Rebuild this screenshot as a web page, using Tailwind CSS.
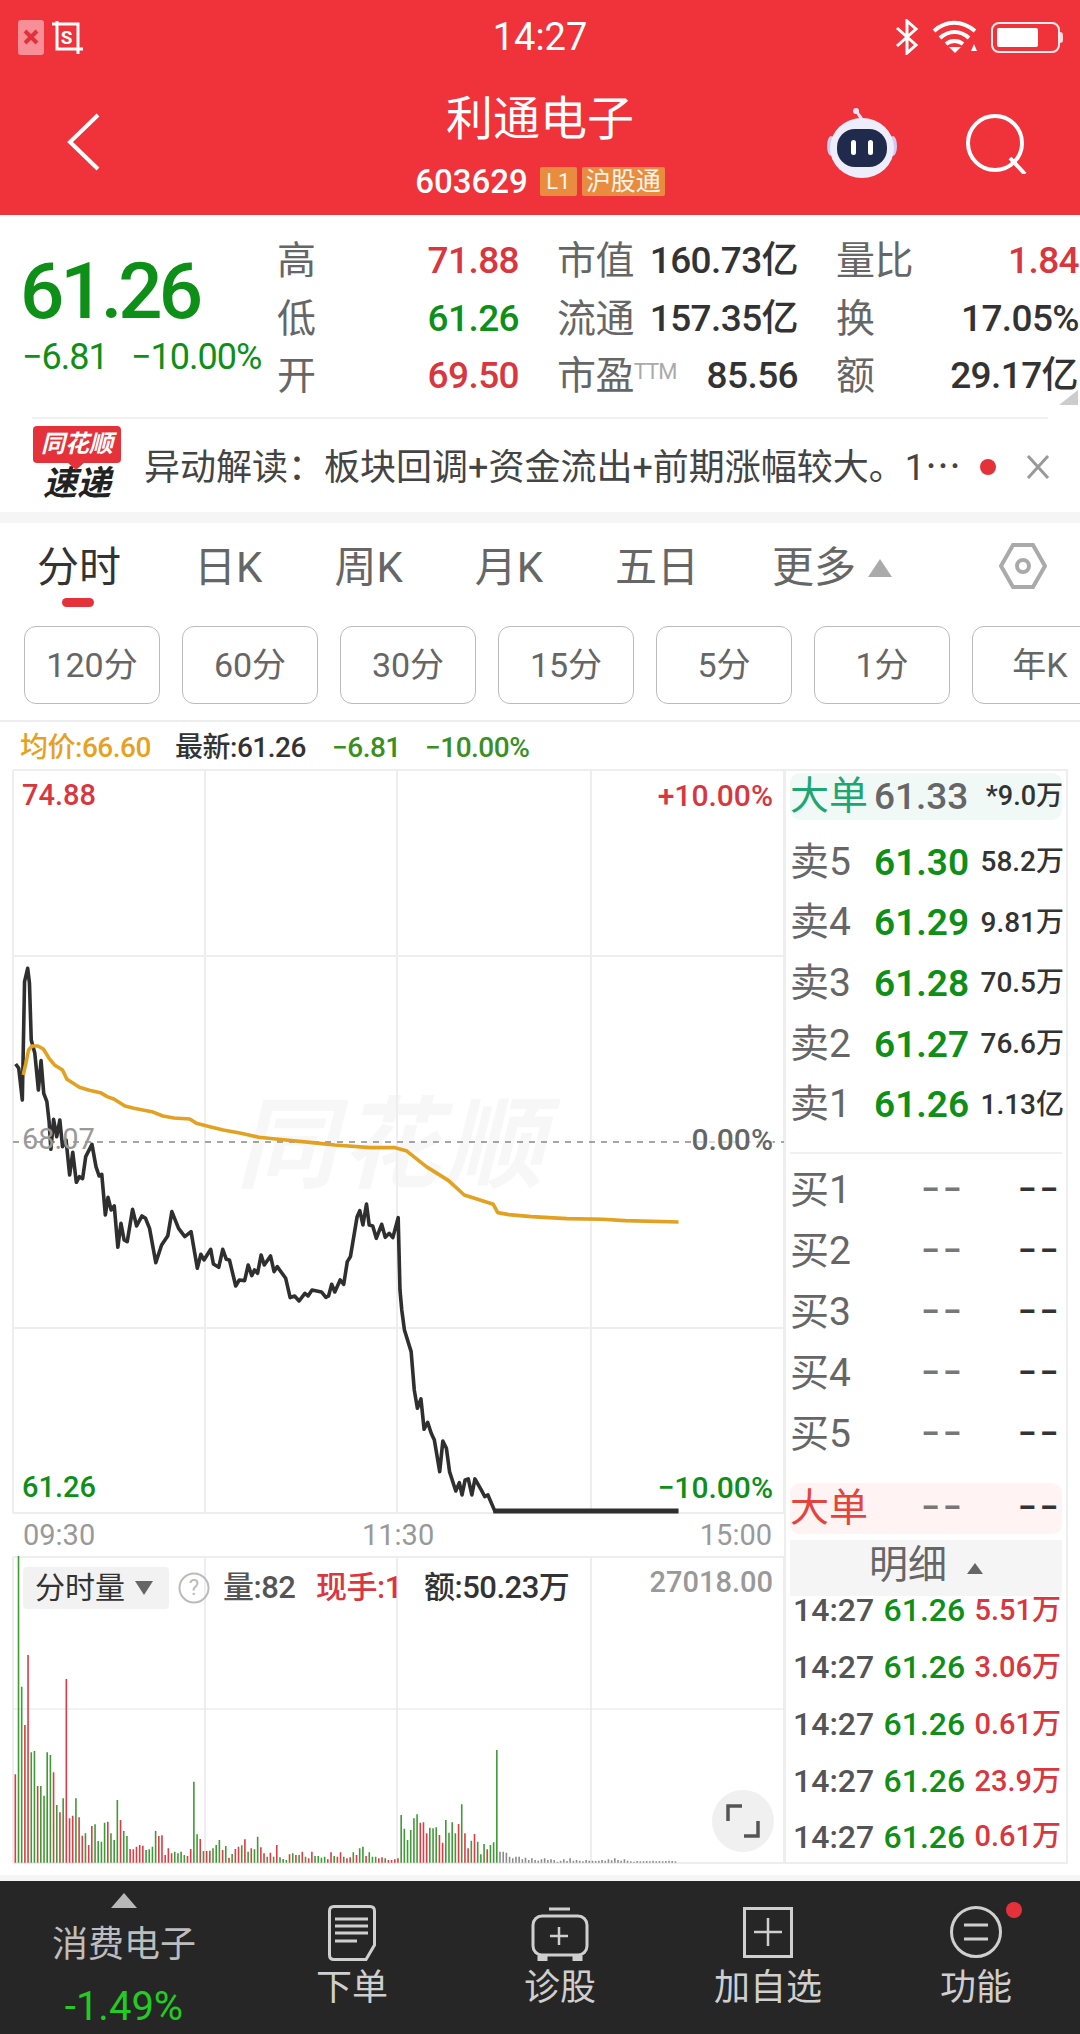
<!DOCTYPE html>
<html lang="zh-CN">
<head>
<meta charset="UTF-8">
<title>利通电子</title>
<script src="https://cdn.jsdelivr.net/npm/@tailwindcss/browser@4"></script>
</head>
<body class="bg-white [font-family:Roboto,'Noto_Sans_CJK_SC',sans-serif]">
<div class="w-[1080px] h-[2034px] overflow-hidden flex flex-col">

  <!-- red header -->
  <header class="h-[215px] shrink-0 bg-[#f0323a] text-white">
    <div class="h-[74px] px-[18px] grid grid-cols-3 items-center">
      <div class="flex items-center gap-[8px]">
        <div class="w-[26px] h-[35px] rounded-[3px] bg-[#f98f96] flex items-center justify-center">
          <svg width="16" height="16" viewBox="0 0 16 16"><path d="M2 2 14 14M14 2 2 14" stroke="#e0323a" stroke-width="4"/></svg>
        </div>
        <div class="relative w-[31px] h-[33px] flex items-center justify-center">
          <svg class="absolute inset-0" width="31" height="33" viewBox="0 0 31 33" fill="none" stroke="#fff" stroke-width="3"><path d="M0 3H26V33M5 0V28H31"/></svg>
          <span class="relative text-[19px] leading-none font-bold mr-[2px]">S</span>
        </div>
      </div>
      <div class="text-center text-[38px] leading-none">14:27</div>
      <div class="flex items-center justify-end gap-[12px] pr-[2px]">
        <svg width="24" height="36" viewBox="0 0 24 36" fill="none" stroke="#fff" stroke-width="3"><path d="M2 9 21 26 12 34V2L21 10 2 27"/></svg>
        <svg width="48" height="34" viewBox="0 0 48 34" fill="none" stroke="#fff" stroke-width="4"><path d="M3 11C15 0 31 0 44 11M9 18C18 10 29 10 38 18M15 24C20 20 27 20 32 24"/><path d="M24 33 18 27H30Z" fill="#fff" stroke="none"/><path d="M43 24 46 31H40Z" fill="#fff" stroke="none"/></svg>
        <div class="relative w-[69px] h-[31px] rounded-[8px] border-2 border-white/90 p-[4px]">
          <div class="w-[41px] h-full bg-white rounded-[2px]"></div>
          <div class="absolute right-[-5px] top-[8px] w-[3px] h-[11px] bg-white/80 rounded-r"></div>
        </div>
      </div>
    </div>
    <div class="h-[141px] flex">
      <div class="w-[300px] pl-[66px] pt-[38px]">
        <svg width="36" height="60" viewBox="0 0 36 60" fill="none" stroke="#fff" stroke-width="4"><path d="M32 3 4 30 32 57"/></svg>
      </div>
      <div class="flex-1 flex flex-col items-center">
        <div class="text-[47px] leading-none mt-[21px] font-normal">利通电子</div>
        <div class="flex items-center mt-[23px]">
          <span class="text-[33px] leading-none font-medium">603629</span>
          <span class="ml-[12px] w-[37px] h-[29px] bg-[#e88c3f] rounded-[2px] text-[22px] leading-[29px] text-center text-white/90">L1</span>
          <span class="ml-[5px] w-[83px] h-[29px] bg-[#e88c3f] rounded-[2px] text-[25px] leading-[29px] text-center text-white/90">沪股通</span>
        </div>
      </div>
      <div class="w-[300px] flex items-start justify-end pr-[52px] gap-[67px] pt-[32px]">
        <svg width="74" height="70" viewBox="0 0 74 70" class="mt-[2px]">
          <path d="M37 12C36 8 33 8 32 3" stroke="#e6e4f8" stroke-width="3" fill="none"/>
          <circle cx="31" cy="3" r="3" fill="#e6e4f8"/>
          <ellipse cx="6" cy="38" rx="4" ry="10" fill="#cfcaf2"/>
          <ellipse cx="68" cy="38" rx="4" ry="10" fill="#cfcaf2"/>
          <ellipse cx="37" cy="40" rx="32" ry="30" fill="#eeedfb"/>
          <rect x="12" y="21" width="50" height="38" rx="18" fill="#1f2a4c"/>
          <rect x="26" y="32" width="5" height="15" rx="2.5" fill="#fff"/>
          <rect x="43" y="32" width="5" height="15" rx="2.5" fill="#fff"/>
        </svg>
        <svg width="62" height="62" viewBox="0 0 62 62" fill="none" stroke="#fff" stroke-width="4" class="mt-[6px] shrink-0"><circle cx="29" cy="31" r="27"/><path d="M44 46 59 62"/></svg>
      </div>
    </div>
  </header>

  <!-- quote block -->
  <section class="h-[202px] shrink-0 relative flex">
    <div class="w-[277px] pl-[20px] pt-[35px] shrink-0">
      <div class="text-[78px] leading-[84px] font-medium text-[#0e8f17] tracking-[-4px]">61.26</div>
      <div class="flex text-[36px] leading-none text-[#0e8f17] mt-[5px] tracking-[-1px]">
        <span class="w-[111px] pl-[2px]">−6.81</span><span>−10.00%</span>
      </div>
    </div>
    <div class="grid grid-cols-[242px_241px_243px] gap-x-[38px] auto-rows-[57.5px] pt-[18px] text-[37px] items-center leading-none font-medium text-[#333] tracking-[-0.6px]">
      <div class="flex justify-between"><span class="font-normal text-[39px] text-[#666]">高</span><span class="text-[#d9363e]">71.88</span></div>
      <div class="flex justify-between"><span class="font-normal text-[39px] text-[#666]">市值</span><span>160.73亿</span></div>
      <div class="flex justify-between"><span class="font-normal text-[39px] text-[#666]">量比</span><span class="text-[#d9363e]">1.84</span></div>
      <div class="flex justify-between"><span class="font-normal text-[39px] text-[#666]">低</span><span class="text-[#0e8f17]">61.26</span></div>
      <div class="flex justify-between"><span class="font-normal text-[39px] text-[#666]">流通</span><span>157.35亿</span></div>
      <div class="flex justify-between"><span class="font-normal text-[39px] text-[#666]">换</span><span>17.05%</span></div>
      <div class="flex justify-between"><span class="font-normal text-[39px] text-[#666]">开</span><span class="text-[#d9363e]">69.50</span></div>
      <div class="flex justify-between"><span class="font-normal text-[39px] text-[#666]">市盈<span class="text-[22px] align-[10px] text-[#aaa] tracking-[-1px]">TTM</span></span><span>85.56</span></div>
      <div class="flex justify-between"><span class="font-normal text-[39px] text-[#666]">额</span><span class="pr-[1px]">29.17亿</span></div>
    </div>
    <svg class="absolute left-[1055px] top-[175px]" width="23" height="15" viewBox="0 0 23 15"><path d="M23 0V15H4Z" fill="#ccc"/></svg>
  </section>

  <!-- news ticker -->
  <section class="h-[95px] shrink-0 mx-[32px] border-t-2 border-[#f0f0f0] flex items-center relative">
    <div class="w-[88px] ml-[1px] flex flex-col items-center shrink-0 mt-[-4px]">
      <div class="relative w-[88px] h-[37px] rounded-[4px] bg-[#e5323a] text-white text-[24px] leading-[37px] text-center italic font-bold">同花顺
        <svg class="absolute left-[34px] top-[36px]" width="18" height="8" viewBox="0 0 18 8"><path d="M0 0H18L9 8Z" fill="#e5323a"/></svg>
      </div>
      <div class="text-[34px] leading-[36px] mt-[2px] italic font-bold text-[#222]">速递</div>
    </div>
    <div class="ml-[23px] text-[36px] leading-none text-[#444] whitespace-nowrap">异动解读：板块回调+资金流出+前期涨幅较大。1<span class="[font-family:'Noto_Sans_CJK_SC',sans-serif]">…</span></div>
    <div class="absolute left-[948px] top-[40px] w-[16px] h-[16px] rounded-full bg-[#e5323a]"></div>
    <svg class="absolute left-[994px] top-[36px]" width="24" height="24" viewBox="0 0 24 24"><path d="M2 1 22 23M22 1 2 23" stroke="#999" stroke-width="3"/></svg>
  </section>
  <div class="h-[11px] shrink-0 bg-[#f5f5f5]"></div>

  <!-- period tabs -->
  <nav class="h-[89px] shrink-0 relative flex items-center pl-[37px] text-[42px] leading-none text-[#666]">
    <span class="text-[#333]">分时</span>
    <span class="ml-[73px]">日K</span>
    <span class="ml-[72px]">周K</span>
    <span class="ml-[72px]">月K</span>
    <span class="ml-[72px]">五日</span>
    <span class="ml-[73px]">更多</span>
    <svg class="ml-[12px]" width="24" height="18" viewBox="0 0 24 18"><path d="M12 0 24 18H0Z" fill="#aaa"/></svg>
    <svg class="absolute left-[999px] top-[19px]" width="48" height="48" viewBox="0 0 48 48" fill="none" stroke="#aaa" stroke-width="4"><path d="M14 3H34L46 24 34 45H14L2 24Z"/><circle cx="24" cy="24" r="6"/></svg>
    <div class="absolute left-[62px] top-[75px] w-[32px] h-[9px] rounded-full bg-[#e5323a]"></div>
  </nav>

  <!-- minute buttons -->
  <div class="h-[110px] shrink-0 flex gap-[22px] pl-[24px] pt-[14px] overflow-hidden border-b-2 border-[#eee] text-[34px] text-[#666]">
    <div class="w-[136px] h-[78px] shrink-0 rounded-[12px] border border-[#bbb] flex items-center justify-center">120分</div>
    <div class="w-[136px] h-[78px] shrink-0 rounded-[12px] border border-[#bbb] flex items-center justify-center">60分</div>
    <div class="w-[136px] h-[78px] shrink-0 rounded-[12px] border border-[#bbb] flex items-center justify-center">30分</div>
    <div class="w-[136px] h-[78px] shrink-0 rounded-[12px] border border-[#bbb] flex items-center justify-center">15分</div>
    <div class="w-[136px] h-[78px] shrink-0 rounded-[12px] border border-[#bbb] flex items-center justify-center">5分</div>
    <div class="w-[136px] h-[78px] shrink-0 rounded-[12px] border border-[#bbb] flex items-center justify-center">1分</div>
    <div class="w-[136px] h-[78px] shrink-0 rounded-[12px] border border-[#bbb] flex items-center justify-center">年K</div>
  </div>

  <!-- legend -->
  <div class="h-[47px] shrink-0 flex items-center pl-[20px] pt-[4px] text-[28px] leading-none font-medium tracking-[-0.5px]">
    <span class="w-[155px] text-[#e8a020]">均价:66.60</span>
    <span class="w-[157px] text-[#333]">最新:61.26</span>
    <span class="w-[93px] text-[#3a8f22]">−6.81</span>
    <span class="text-[#3a8f22]">−10.00%</span>
  </div>

  <!-- chart + order book -->
  <div class="h-[1095px] shrink-0 flex">
    <div class="relative w-[784px] shrink-0">
      <svg id="chart" class="absolute inset-0" width="784" height="1095" viewBox="0 769 784 1095" fill="none">
        <g stroke="#eee" stroke-width="2">
          <path d="M13 770H784M13 956H784M13 1328H784M13 1513H784M13 1557H784M13 1863H784"/>
          <path d="M13 770V1513M205 770V1513M397 770V1513M591 770V1513M784 770V1513M13 1557V1863M205 1557V1863M397 1557V1863M591 1557V1863M784 1557V1863"/>
          <path d="M13 1709H784" stroke="#e4e4e4" stroke-width="1"/>
        </g>
        <path d="M13 1142H784" stroke="#888" stroke-width="1.5" stroke-dasharray="6 6"/>
        <g transform="translate(0 940) scale(.4464 .3333)" fill="none" stroke-linejoin="round">
          <polyline vector-effect="non-scaling-stroke" stroke="#2f2f2f" stroke-width="3.6" points="35,372 42,385 50,480 55,125 62,85 66,130 70,300 78,340 86,450 92,362 98,460 105,485 110,545 114,628 120,538 127,590 134,540 140,620 148,600 156,705 163,637 171,727 178,710 185,716 192,650 206,613 215,680 222,708 228,703 236,825 242,772 249,810 256,798 264,922 271,850 278,900 285,905 297,808 306,858 318,828 326,835 335,865 349,968 362,915 376,887 385,815 400,865 414,890 428,875 442,985 450,943 457,960 472,928 478,972 490,982 499,928 507,958 514,960 528,1038 536,1020 548,1022 556,975 564,1007 570,990 577,1000 585,945 592,975 606,948 614,995 621,980 640,1015 650,1073 660,1068 670,1083 683,1060 690,1068 699,1050 720,1056 730,1072 736,1068 743,1033 750,1056 762,1020 770,1033 778,965 785,950 800,830 806,812 813,855 821,792 827,855 835,858 843,895 855,853 863,892 872,880 880,893 892,833 896,1050 900,1110 906,1170 921,1235 928,1350 935,1405 943,1377 950,1468 958,1447 966,1480 973,1500 985,1595 992,1503 1000,1525 1007,1595 1021,1653 1029,1628 1035,1665 1042,1620 1049,1617 1057,1665 1064,1617 1078,1650 1086,1670 1093,1665 1109,1715"/>
          <polyline vector-effect="non-scaling-stroke" stroke="#2f2f2f" stroke-width="5" points="1105,1713 1520,1713"/>
          <polyline vector-effect="non-scaling-stroke" stroke="#e3a122" stroke-width="3.6" points="52,405 58,370 64,330 72,318 85,318 97,327 110,355 122,375 140,390 150,418 178,442 200,451 225,458 240,470 255,477 280,498 300,505 340,515 365,528 390,534 425,537 440,550 470,560 500,570 540,580 580,592 640,600 700,608 750,615 830,623 885,623 910,632 955,680 1005,722 1040,765 1070,778 1105,793 1115,818 1140,824 1190,830 1270,836 1350,838 1400,842 1520,846"/>
        </g>
        <g id="bars" transform="translate(0 1540) scale(.5102 .3333)"></g>
      </svg>

      <!-- watermark and chart labels sit over the plot -->
      <div class="absolute left-[236px] top-[327px] text-[100px] leading-none italic text-black/[0.03] font-bold tracking-[4px] -z-10">同花顺</div>
      <span class="absolute left-[22px] top-[12px] text-[29px] leading-none font-medium text-[#d9363e]">74.88</span>
      <span class="absolute right-[11px] top-[12px] text-[30px] leading-none font-medium text-[#d9363e]">+10.00%</span>
      <span class="absolute left-[22px] top-[356px] text-[29px] leading-none text-[#999]">68.07</span>
      <span class="absolute right-[11px] top-[356px] text-[30px] leading-none font-medium text-[#666] bg-white/60">0.00%</span>
      <span class="absolute left-[22px] top-[704px] text-[29px] leading-none font-medium text-[#0e8f17]">61.26</span>
      <span class="absolute right-[11px] top-[704px] text-[30px] leading-none font-medium text-[#0e8f17]">−10.00%</span>
      <span class="absolute left-[23px] top-[752px] text-[29px] leading-none text-[#999]">09:30</span>
      <span class="absolute left-[362px] top-[752px] text-[29px] leading-none text-[#999]">11:30</span>
      <span class="absolute right-[12px] top-[752px] text-[29px] leading-none text-[#999]">15:00</span>

      <div class="absolute left-[23px] top-[798px] h-[42px] w-[146px] rounded-[4px] bg-[#f2f2f2] flex items-center pl-[12px] text-[30px] leading-none text-[#333]">分时量
        <svg class="ml-[10px]" width="18" height="14" viewBox="0 0 18 14"><path d="M0 0H18L9 14Z" fill="#666"/></svg>
      </div>
      <svg class="absolute left-[178px] top-[802px]" width="32" height="34" viewBox="0 0 32 34" fill="none"><circle cx="16" cy="17" r="14.5" stroke="#bbb" stroke-width="2"/></svg>
      <span class="absolute left-[178px] top-[802px] w-[32px] h-[34px] text-[22px] leading-[34px] text-center text-[#bbb]">?</span>
      <div class="absolute left-[223px] top-[803px] flex text-[31px] leading-none font-medium tracking-[-0.5px] text-[#555]">
        <span class="w-[93px]">量:82</span><span class="w-[108px] text-[#d9363e]">现手:1</span><span class="text-[#333]">额:50.23万</span>
      </div>
      <span class="absolute right-[11px] top-[799px] text-[29px] leading-none font-medium text-[#999]">27018.00</span>

      <div class="absolute left-[712px] top-[1021px] w-[62px] h-[62px] rounded-full bg-[#eee]/90 flex items-center justify-center">
        <svg width="34" height="34" viewBox="0 0 34 34" fill="none" stroke="#555" stroke-width="3.5"><path d="M2 17V2H16M32 17V32H18"/></svg>
      </div>
    </div>

    <!-- order book -->
    <aside class="w-[284px] h-[1095px] shrink-0 px-[4px] border-2 border-[#eee] box-border">
      <div class="h-[47px] mt-[2px] rounded-[10px] bg-[#f0f9f6] flex items-center whitespace-nowrap">
        <span class="w-[84px] text-[39px] leading-none text-[#1ea672]">大单</span>
        <span class="text-[37px] leading-none text-[#666] font-medium">61.33</span>
        <span class="ml-auto -mr-[1px] text-[27px] leading-none text-[#333] font-medium">*9.0万</span>
      </div>

      <div class="mt-[12px] text-[39px]">
        <div class="h-[60.6px] flex items-center"><span class="w-[84px] leading-none text-[#666]">卖5</span><span class="text-[37px] leading-none font-semibold text-[#0e8f17]">61.30</span><span class="flex-1 -mr-[2px] text-right text-[28px] leading-none font-medium text-[#333]">58.2万</span></div>
        <div class="h-[60.6px] flex items-center"><span class="w-[84px] leading-none text-[#666]">卖4</span><span class="text-[37px] leading-none font-semibold text-[#0e8f17]">61.29</span><span class="flex-1 -mr-[2px] text-right text-[28px] leading-none font-medium text-[#333]">9.81万</span></div>
        <div class="h-[60.6px] flex items-center"><span class="w-[84px] leading-none text-[#666]">卖3</span><span class="text-[37px] leading-none font-semibold text-[#0e8f17]">61.28</span><span class="flex-1 -mr-[2px] text-right text-[28px] leading-none font-medium text-[#333]">70.5万</span></div>
        <div class="h-[60.6px] flex items-center"><span class="w-[84px] leading-none text-[#666]">卖2</span><span class="text-[37px] leading-none font-semibold text-[#0e8f17]">61.27</span><span class="flex-1 -mr-[2px] text-right text-[28px] leading-none font-medium text-[#333]">76.6万</span></div>
        <div class="h-[60.6px] flex items-center"><span class="w-[84px] leading-none text-[#666]">卖1</span><span class="text-[37px] leading-none font-semibold text-[#0e8f17]">61.26</span><span class="flex-1 -mr-[2px] text-right text-[28px] leading-none font-medium text-[#333]">1.13亿</span></div>
      </div>

      <div class="mt-[17px] mb-[6px] h-[2px] bg-[#f0f0f0]"></div>

      <div class="text-[39px]">
        <div class="h-[61px] flex items-center"><span class="w-[132px] leading-none text-[#666]">买1</span><span class="w-[97px] font-black text-[27px] leading-none text-[#777] tracking-[5px]">––</span><span class="font-black text-[27px] leading-none text-[#333] tracking-[5px]">––</span></div>
        <div class="h-[61px] flex items-center"><span class="w-[132px] leading-none text-[#666]">买2</span><span class="w-[97px] font-black text-[27px] leading-none text-[#777] tracking-[5px]">––</span><span class="font-black text-[27px] leading-none text-[#333] tracking-[5px]">––</span></div>
        <div class="h-[61px] flex items-center"><span class="w-[132px] leading-none text-[#666]">买3</span><span class="w-[97px] font-black text-[27px] leading-none text-[#777] tracking-[5px]">––</span><span class="font-black text-[27px] leading-none text-[#333] tracking-[5px]">––</span></div>
        <div class="h-[61px] flex items-center"><span class="w-[132px] leading-none text-[#666]">买4</span><span class="w-[97px] font-black text-[27px] leading-none text-[#777] tracking-[5px]">––</span><span class="font-black text-[27px] leading-none text-[#333] tracking-[5px]">––</span></div>
        <div class="h-[61px] flex items-center"><span class="w-[132px] leading-none text-[#666]">买5</span><span class="w-[97px] font-black text-[27px] leading-none text-[#777] tracking-[5px]">––</span><span class="font-black text-[27px] leading-none text-[#333] tracking-[5px]">––</span></div>
      </div>

      <div class="h-[51px] mt-[18px] rounded-[10px] bg-[#fff3f3] flex items-center">
        <span class="w-[132px] text-[39px] leading-none text-[#e5443c]">大单</span>
        <span class="w-[97px] font-black text-[27px] leading-none text-[#777] tracking-[5px]">––</span>
        <span class="font-black text-[27px] leading-none text-[#333] tracking-[5px]">––</span>
      </div>

      <div class="h-[56px] mt-[6px] bg-[#f5f5f6] flex items-start justify-center pt-[3px] text-[39px] leading-[44px] text-[#666]">
        明细
        <svg class="ml-[20px] mt-[20px]" width="16" height="11" viewBox="0 0 16 11"><path d="M8 0 16 11H0Z" fill="#666"/></svg>
      </div>

      <div class="-mt-[14px] text-[32px] font-medium relative">
        <div class="h-[57px] flex items-center justify-between pl-[3px] pr-[1px] leading-none"><span class="text-[#555]">14:27</span><span class="text-[#0e8f17]">61.26</span><span class="text-[#d9363e] text-[29px]">5.51万</span></div>
        <div class="h-[57px] flex items-center justify-between pl-[3px] pr-[1px] leading-none"><span class="text-[#555]">14:27</span><span class="text-[#0e8f17]">61.26</span><span class="text-[#d9363e] text-[29px]">3.06万</span></div>
        <div class="h-[57px] flex items-center justify-between pl-[3px] pr-[1px] leading-none"><span class="text-[#555]">14:27</span><span class="text-[#0e8f17]">61.26</span><span class="text-[#d9363e] text-[29px]">0.61万</span></div>
        <div class="h-[57px] flex items-center justify-between pl-[3px] pr-[1px] leading-none"><span class="text-[#555]">14:27</span><span class="text-[#0e8f17]">61.26</span><span class="text-[#d9363e] text-[29px]">23.9万</span></div>
        <div class="h-[54px] flex items-center justify-between pl-[3px] pr-[1px] leading-none"><span class="text-[#555]">14:27</span><span class="text-[#0e8f17]">61.26</span><span class="text-[#d9363e] text-[29px]">0.61万</span></div>
      </div>
    </aside>
  </div>

  <div class="h-[11px] shrink-0"></div>
  <div class="h-[6px] shrink-0 bg-[#f5f5f5]"></div>

  <!-- bottom bar -->
  <footer class="h-[153px] shrink-0 bg-[#262626] flex text-[#cfcfcf]">
    <div class="w-[248px] flex flex-col items-center pt-[12px]">
      <svg width="26" height="15" viewBox="0 0 26 15"><path d="M13 0 26 15H0Z" fill="#b8b8b8"/></svg>
      <div class="mt-[19px] text-[36px] leading-none text-[#bdbdbd]">消费电子</div>
      <div class="mt-[24px] text-[40px] leading-none text-[#22cc22]">-1.49%</div>
    </div>
    <div class="w-[208px] flex flex-col items-center pt-[24px]">
      <svg width="48" height="56" viewBox="0 0 48 56" fill="none" stroke="#cfcfcf" stroke-width="3"><path d="M6 1.5H42Q46.5 1.5 46.5 6V40L38 54.5H6Q1.5 54.5 1.5 50V6Q1.5 1.5 6 1.5Z"/><path d="M7 14H40M7 21H40M7 28H40M7 36H29"/></svg>
      <div class="mt-[9px] text-[36px] leading-none">下单</div>
    </div>
    <div class="w-[208px] flex flex-col items-center pt-[24px]">
      <svg width="58" height="56" viewBox="0 0 58 56" fill="none" stroke="#cfcfcf" stroke-width="3"><path d="M18 4H39"/><rect x="2" y="11" width="54" height="39" rx="9"/><path d="M8 51V55H15V51M43 51V55H50V51" fill="#cfcfcf"/><path d="M28 22V40M19 31H37" stroke-width="2.5"/></svg>
      <div class="mt-[9px] text-[36px] leading-none">诊股</div>
    </div>
    <div class="w-[208px] flex flex-col items-center pt-[24px]">
      <svg width="50" height="56" viewBox="0 0 50 56" fill="none" stroke="#cfcfcf" stroke-width="3"><rect x="1.5" y="3.5" width="47" height="48"/><path d="M25 13V41M11 27H39" stroke-width="2.5"/></svg>
      <div class="mt-[9px] text-[36px] leading-none">加自选</div>
    </div>
    <div class="relative w-[208px] flex flex-col items-center pt-[24px]">
      <svg width="52" height="56" viewBox="0 0 52 56" fill="none" stroke="#cfcfcf" stroke-width="3"><circle cx="26" cy="27" r="24.5"/><path d="M14 20H38M14 34H38"/></svg>
      <div class="mt-[9px] text-[36px] leading-none">功能</div>
      <div class="absolute left-[134px] top-[21px] w-[16px] h-[16px] rounded-full bg-[#e5323a]"></div>
    </div>
  </footer>
</div>

<script>
  // volume bars: tops in a 0-968 plot, one letter per bar for its colour
  const tops = [703,48,440,555,345,637,633,738,738,767,637,645,697,795,817,775,417,835,827,775,832,887,880,915,858,853,903,905,848,845,880,900,780,840,873,888,927,928,920,915,917,930,928,920,873,888,886,945,925,940,935,940,935,945,948,927,725,883,897,933,933,932,925,915,900,930,918,953,942,927,920,916,898,935,925,928,890,922,940,950,938,950,915,952,957,960,943,940,945,945,935,950,955,935,948,948,953,950,958,937,948,950,937,950,955,952,937,945,925,920,948,937,950,950,955,952,955,960,960,958,955,825,866,900,870,835,823,848,847,880,863,865,862,885,908,840,878,847,880,852,793,880,925,902,882,905,943,912,928,915,907,630];
  const colors = 'rggrrggrgg' + 'ggrgrgrrrg' + 'rrgrrggggr' + 'gggrggrrrr' + 'rggggrrrrr' + 'ggggrrggrg' + 'rrgggrgrgr' + 'rgrgrggrrg' + 'rgrgggrgrg' + 'rgrrggggrr' + 'grrgrrgrgg' + 'rgggrrgrrr' + 'rggggggrrr' + 'gggrrggggr' + 'grrgrgggrg' + 'gg';
  const grays = [935,935,938,950,955,950,950,958,953,960,955,960,962,958,955,960,958,960,965,962,958,963,955,962,960,962,964,960,962,962,963,962,960,962,958,961,955,960,962,958,962,964,965,963,964,964,963,964,962,964,963,964,963,962,963,964];
  const paths = {r: '', g: '', n: ''};
  tops.forEach((t, i) => { paths[colors[i]] += `M${(30 + i * 6.25).toFixed(1)} ${t}V968`; });
  grays.forEach((t, i) => { paths.n += `M${(980 + i * 6.25).toFixed(1)} ${t}V968`; });
  const stroke = {r: '#dc3c44', g: '#3f9a35', n: '#8a8a8a'};
  const bars = document.getElementById('bars');
  for (const k in paths) {
    const p = document.createElementNS('http://www.w3.org/2000/svg', 'path');
    p.setAttribute('d', paths[k]);
    p.setAttribute('stroke', stroke[k]);
    p.setAttribute('stroke-width', '1.6');
    p.setAttribute('vector-effect', 'non-scaling-stroke');
    bars.appendChild(p);
  }
</script>
</body>
</html>
